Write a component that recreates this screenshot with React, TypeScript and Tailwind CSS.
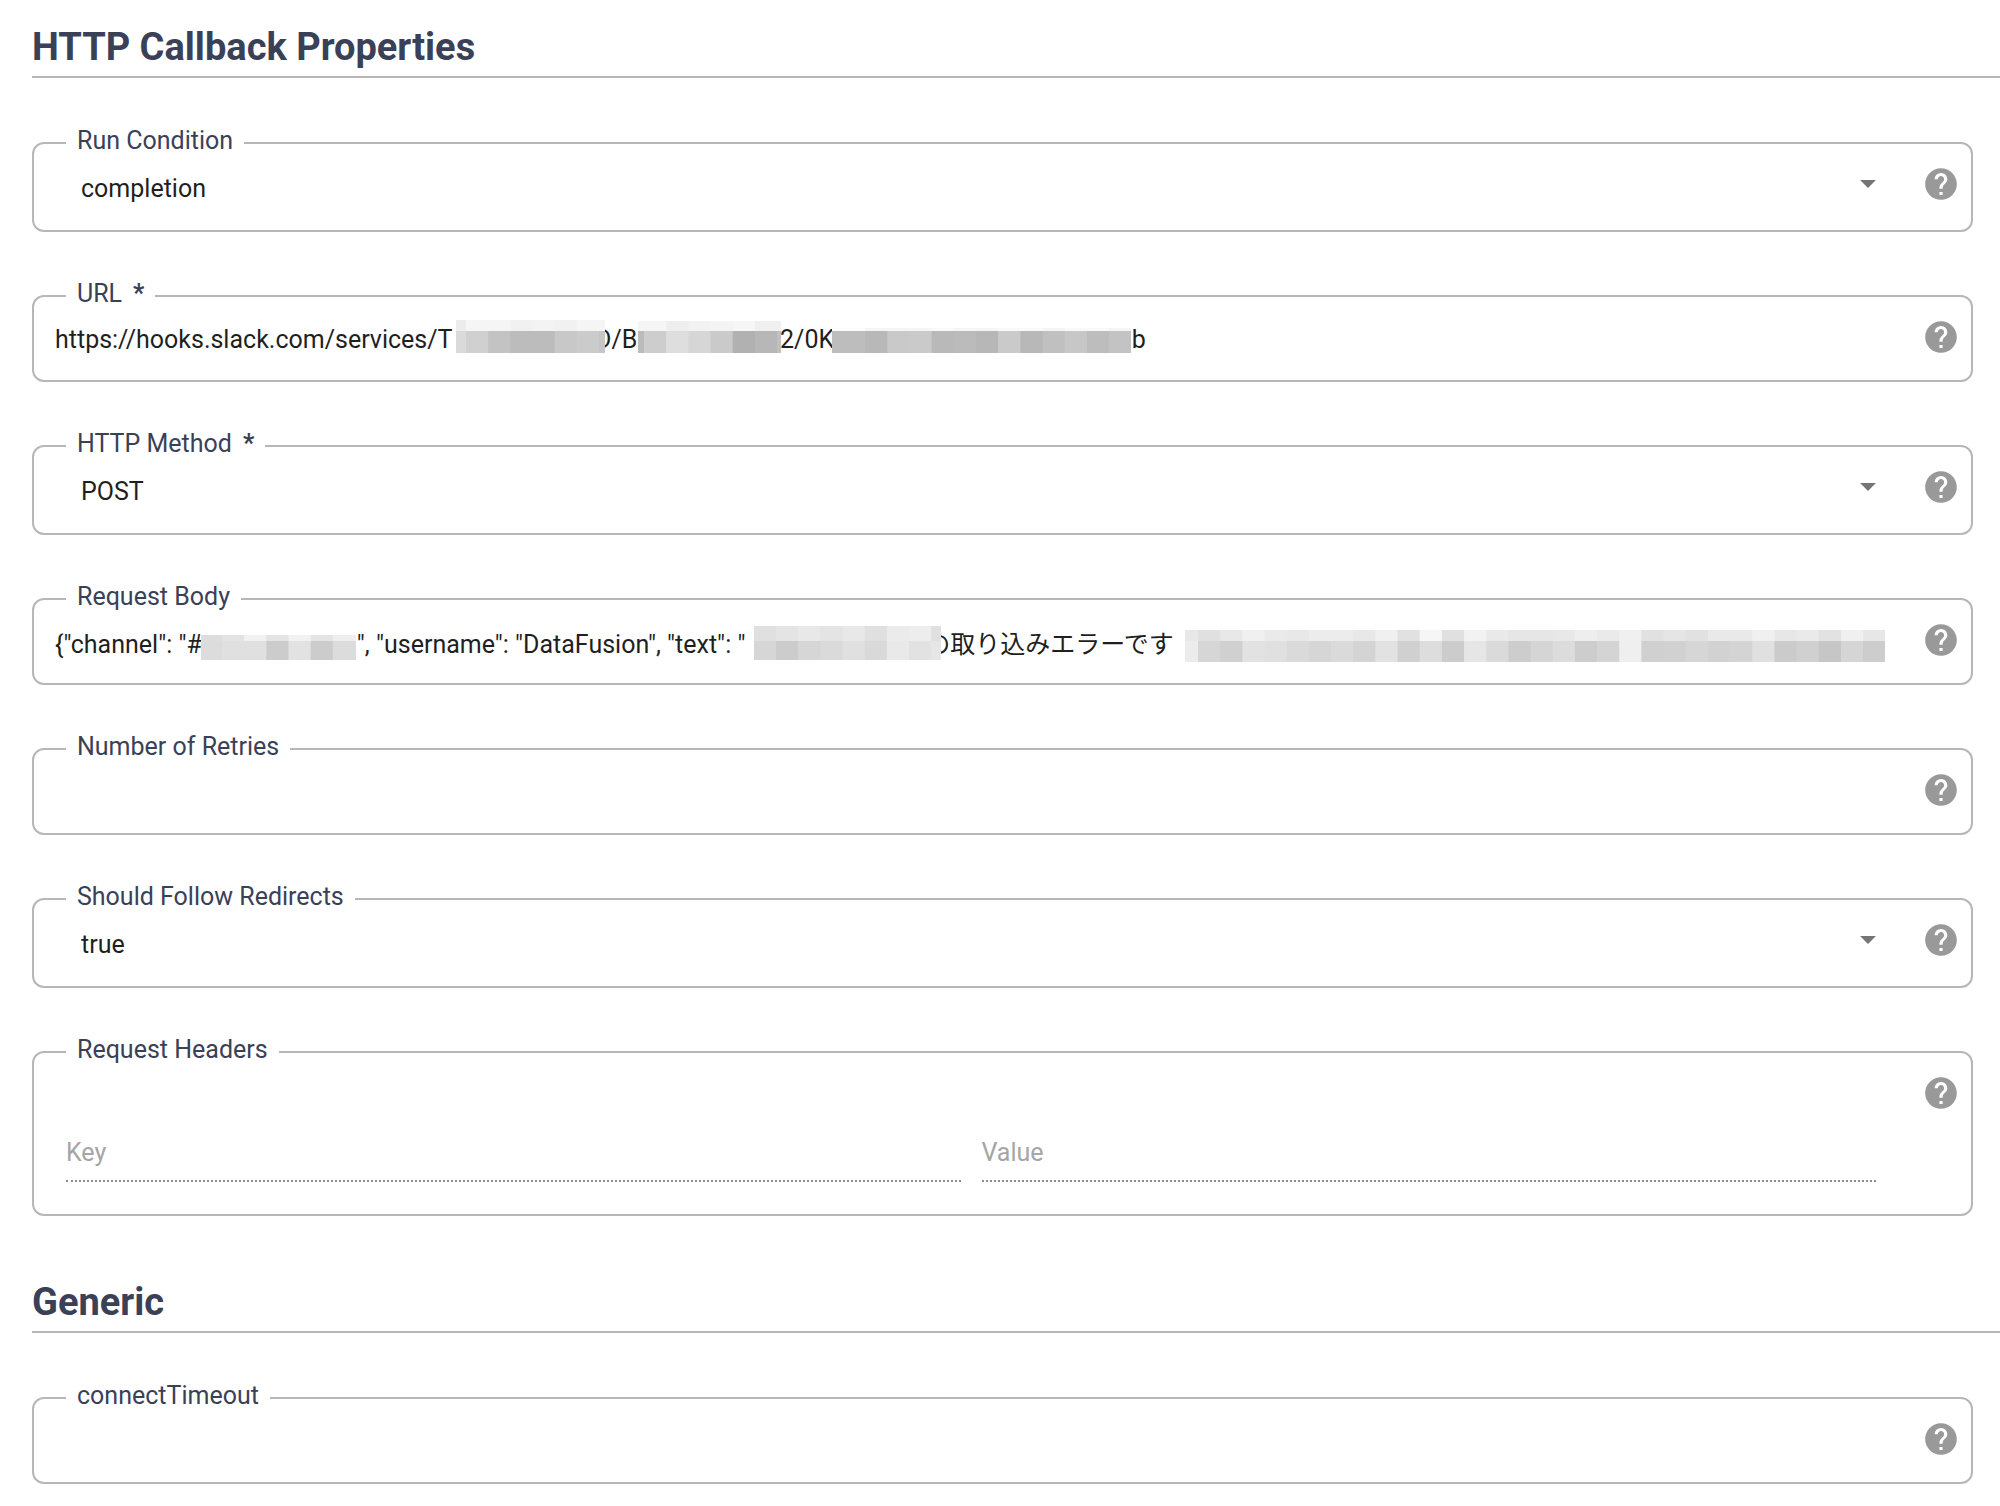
import { ReactNode } from "react";

const URL_VALUE =
  "https://hooks.slack.com/services/T" +
  "\u00a0".repeat(23) +
  "D/B" +
  "\u00a0".repeat(23) +
  "2/0K" +
  "\u00a0".repeat(48) +
  "b";

const BODY_VALUE =
  '{"channel": "#' +
  "\u00a0".repeat(25) +
  '", "username": "DataFusion", "text": "' +
  "\u00a0".repeat(29) +
  "の取り込みエラーです";

const CELL = 22.17;

type MosaicProps = {
  className: string;
  first: number;
  width: number;
  split: number;
  height: number;
  top: string;
  bottom: string;
};

// top / bottom are space separated two digit grey levels, one for each cell
function Mosaic({ className, first, width, split, height, top, bottom }: MosaicProps) {
  const cells = (levels: string, y: number, h: number) =>
    levels.split(" ").map((level, i) => {
      const x = i === 0 ? 0 : first + (i - 1) * CELL;
      const w = i === 0 ? first : CELL;
      return (
        <rect
          key={i}
          x={x}
          y={y}
          width={w + 1}
          height={h}
          fill={`#${level}${level}${level}`}
        />
      );
    });

  return (
    <svg
      className={`absolute pointer-events-none ${className}`}
      width={width}
      height={height}
      aria-hidden="true"
    >
      {cells(top, 0, split)}
      {cells(bottom, split, height - split)}
    </svg>
  );
}

function HelpButton({ name }: { name: string }) {
  return (
    <button type="button" aria-label={`Help for ${name}`} className="shrink-0">
      <svg className="size-[38px] fill-[#999999]" viewBox="0 0 24 24">
        <path d="M12 2C6.48 2 2 6.48 2 12s4.48 10 10 10 10-4.48 10-10S17.52 2 12 2zm1 17h-2v-2h2v2zm2.07-7.75l-.9.92C13.45 12.9 13 13.5 13 15h-2v-.5c0-1.1.45-2.1 1.17-2.83l1.24-1.26c.37-.36.59-.86.59-1.41 0-1.1-.9-2-2-2s-2 .9-2 2H8c0-2.21 1.79-4 4-4s4 1.79 4 4c0 .88-.36 1.68-.93 2.25z" />
      </svg>
    </button>
  );
}

type FieldProps = {
  id: string;
  label: string;
  required?: boolean;
  children: ReactNode;
};

function Field({ id, label, required, children }: FieldProps) {
  return (
    <fieldset className="min-w-0 rounded-[12px] border-2 border-[#b7b7b7]">
      <legend className="ml-8 px-[11px] pb-1 leading-[30px] text-[#3a4157]">
        <label htmlFor={id}>{label}</label>
        {required && <span className="ml-[11px] font-bold">*</span>}
      </legend>
      <div className="flex items-start gap-[35px] pt-[5px] pr-[11px] pb-5 pl-[21px]">
        <div className="relative min-w-0 flex-1">{children}</div>
        <HelpButton name={label} />
      </div>
    </fieldset>
  );
}

function TextField({
  id,
  label,
  required,
  value = "",
  children,
}: {
  id: string;
  label: string;
  required?: boolean;
  value?: string;
  children?: ReactNode;
}) {
  return (
    <Field id={id} label={label} required={required}>
      <input
        id={id}
        type="text"
        defaultValue={value}
        className="block h-[42px] w-full outline-none"
      />
      {children}
    </Field>
  );
}

function SelectField({
  id,
  label,
  required,
  options,
}: {
  id: string;
  label: string;
  required?: boolean;
  options: string[];
}) {
  return (
    <Field id={id} label={label} required={required}>
      <div className="grid">
        <select
          id={id}
          className="col-start-1 row-start-1 h-[45px] w-full appearance-none pt-[2px] pl-[26px] outline-none"
        >
          {options.map((option) => (
            <option key={option}>{option}</option>
          ))}
        </select>
        <svg
          className="pointer-events-none col-start-1 row-start-1 size-[38px] justify-self-end fill-[#757575]"
          viewBox="0 0 24 24"
        >
          <path d="M7 9.5l5 5 5-5z" />
        </svg>
      </div>
    </Field>
  );
}

function Section({ title, children }: { title: string; children: ReactNode }) {
  return (
    <section>
      <h2 className="mb-12 border-b-2 border-[#b7b7b7] pb-[7px] text-[38px] leading-[44px] font-bold text-[#3a4157]">
        {title}
      </h2>
      <div className="flex flex-col gap-[47px] pr-[27px]">{children}</div>
    </section>
  );
}

const pairInput =
  "h-[50px] min-w-0 flex-1 border-b-2 border-dotted border-[#8c8c8c] pb-2 outline-none placeholder:text-[#a5a5a5]";

export default function App() {
  return (
    <main className="flex min-h-screen flex-col gap-16 bg-white pt-[25px] pb-5 pl-8 font-[Roboto,'Noto_Sans_CJK_JP',sans-serif] text-[25px] text-[#1f1f1f]">
      <Section title="HTTP Callback Properties">
        <SelectField
          id="run-condition"
          label="Run Condition"
          options={["completion", "success", "failure"]}
        />
        <TextField id="url" label="URL" required value={URL_VALUE}>
          <Mosaic
            className="top-[2px] left-[401px]"
            first={10}
            width={149}
            split={11}
            height={33}
            top="ec f5 f5 f1 f3 f1 f5 f5"
            bottom="da d0 c3 bc bc c8 cb c6"
          />
          <Mosaic
            className="top-[3px] left-[583px]"
            first={6}
            width={143}
            split={10}
            height={32}
            top="f5 f5 ee f2 f4 f6 f0 f0"
            bottom="bb cd de d6 ca b1 b7 c0"
          />
          <Mosaic
            className="top-[10px] left-[777px]"
            first={11}
            width={299}
            split={3}
            height={25}
            top="fc fc f5 f5 f5 f9 f5 f5 f9 f9 f5 f9 f9 f5"
            bottom="bd bd b8 c9 ca b9 bb b7 ca b8 c0 c7 bd c3"
          />
        </TextField>
        <SelectField
          id="method"
          label="HTTP Method"
          required
          options={["POST", "GET", "PUT", "DELETE"]}
        />
        <TextField id="body" label="Request Body" value={BODY_VALUE}>
          <Mosaic
            className="top-[14px] left-[146px]"
            first={21}
            width={155}
            split={6}
            height={25}
            top="dd e3 f2 e4 f2 e4 ee"
            bottom="dc e0 e0 cc e2 cc dc"
          />
          <Mosaic
            className="top-[5px] left-[699px]"
            first={22}
            width={187}
            split={15}
            height={34}
            top="e0 e4 e8 e4 e8 e0 eb ed e0"
            bottom="d6 cc d6 da e0 d9 e9 e2 e6"
          />
          <Mosaic
            className="top-[9px] left-[1130px]"
            first={13}
            width={700}
            split={11}
            height={32}
            top="e8 e0 e8 f0 ea e8 ec ec e8 f0 e1 f6 e0 f2 e9 e6 e6 e8 ee ea f0 e1 e5 e1 e9 e9 f0 e7 ea e2 f0 e7"
            bottom="ec d6 d0 e2 e0 da d6 da d4 e2 d0 dd cc e6 da cd d5 dc cd d4 ef d0 d1 d6 d2 d4 e0 cb d0 c6 d5 cd"
          />
        </TextField>
        <TextField id="retries" label="Number of Retries" />
        <SelectField
          id="redirects"
          label="Should Follow Redirects"
          options={["true", "false"]}
        />
        <Field id="headers" label="Request Headers">
          <div className="flex gap-[21px] px-[11px] pt-[58px] pb-3">
            <input id="headers" type="text" placeholder="Key" className={pairInput} />
            <input type="text" placeholder="Value" aria-label="Value" className={pairInput} />
          </div>
        </Field>
      </Section>
      <Section title="Generic">
        <TextField id="connect-timeout" label="connectTimeout" />
      </Section>
    </main>
  );
}
